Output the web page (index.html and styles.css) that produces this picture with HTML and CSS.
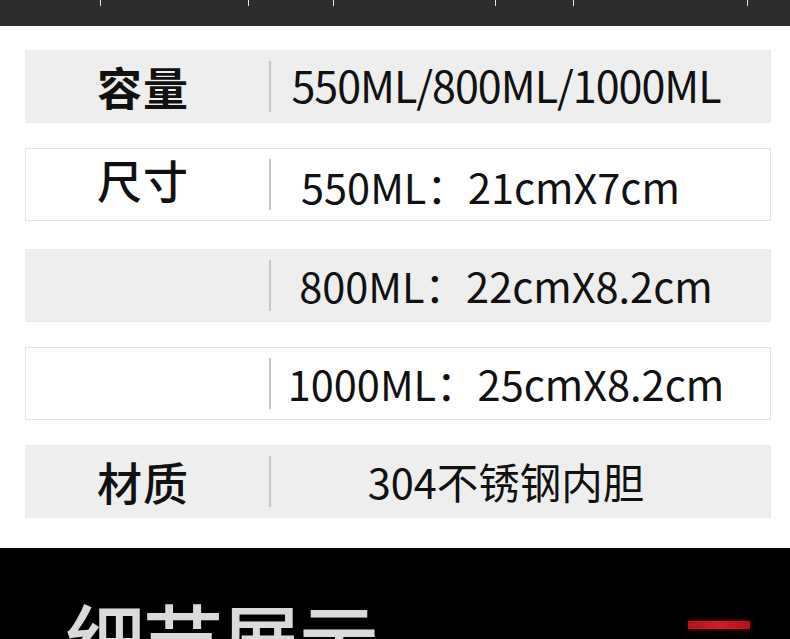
FILE: index.html
```html
<!DOCTYPE html>
<html lang="zh-CN">
<head>
  <meta charset="UTF-8">
  <title>产品参数</title>
  <meta name="viewport" content="width=device-width, initial-scale=1.0">
  <link rel="stylesheet" href="styles.css">
</head>
<body>
  <!-- cropped bottom of the previous table -->
  <div class="topbar">
    <span class="tick w100"></span>
    <span class="tick w148"></span>
    <span class="tick w85"></span>
    <span class="tick w162"></span>
    <span class="tick w78"></span>
    <span class="tick w174"></span>
  </div>

  <main class="specs">
    <div class="row gray">
      <div class="label heavy">容量</div>
      <div class="sep"></div>
      <div class="value tight">550ML/800ML/1000ML</div>
    </div>
    <div class="row white">
      <div class="label up">尺寸</div>
      <div class="sep"></div>
      <div class="value shift">550ML：21cmX7cm</div>
    </div>
    <div class="row gray lower">
      <div class="label"></div>
      <div class="sep"></div>
      <div class="value">800ML：22cmX8.2cm</div>
    </div>
    <div class="row white">
      <div class="label"></div>
      <div class="sep"></div>
      <div class="value">1000ML：25cmX8.2cm</div>
    </div>
    <div class="row gray">
      <div class="label">材质</div>
      <div class="sep"></div>
      <div class="value">304不锈钢内胆</div>
    </div>
  </main>

  <section class="detail">
    <h2 class="detail-title">细节展示</h2>
    <span class="red-bar"></span>
  </section>
</body>
</html>
```

FILE: styles.css
```css
:root{
  --ink:#111;
  --gray-row:#eeeeee;
  --row-line:#e4e4e4;
  --sep:#c6c6c6;
}
*{box-sizing:border-box;}
html,body{margin:0;padding:0;}
body{
  width:790px; height:639px; overflow:hidden;
  background:#fff;
  font-family:"Noto Sans CJK SC","Noto Sans",sans-serif;
  color:var(--ink);
}

/* top strip */
.topbar{
  height:26px; background:#2f2d2c;
  display:flex; align-items:flex-start;
}
.tick{height:6px; border-right:1px solid #e6e6e6;}
.w100{width:101px;}
.w148{width:148px;}
.w85{width:85px;}
.w162{width:162px;}
.w78{width:78px;}
.w174{width:174px;}

/* spec table */
.specs{
  padding:24px 19px 0 25px;
  display:flex; flex-direction:column; gap:25px;
}
.row{
  height:73px;
  display:grid; grid-template-columns:243px 2px 1fr;
  align-items:center;
  border:1px solid var(--row-line);
}
.row.gray{background:var(--gray-row); border-color:#ebebeb;}
.row.white{background:#fff;}
.row.lower{margin-top:3px;}
.label{
  text-align:center; padding-right:9px;
  font-size:45px; font-weight:500; line-height:1;
  letter-spacing:1px;
}
.label.heavy{font-weight:700;}
.label.up{margin-top:-10px;}
.sep{height:51px; background:var(--sep);}
.value{
  text-align:center; padding-right:29px;
  font-size:41.5px; line-height:1;
  white-space:nowrap;
}
.value.tight{font-size:43px; letter-spacing:-1px; margin-top:-5px;}
.value.shift{padding-right:60px; margin-top:4px;}

/* detail header */
.detail{
  margin-top:30px;
  height:120px; background:#000;
  display:flex; justify-content:space-between; align-items:flex-start;
  padding:49px 40px 0 65px;
}
.detail-title{
  margin:0; color:#dadada;
  font-size:80px; font-weight:500; line-height:1;
  letter-spacing:-2px;
}
.red-bar{
  margin-top:24px;
  width:62px; height:8px;
  background:linear-gradient(90deg,#b5121a,#d01e24,#b5121a);
  box-shadow:0 0 6px rgba(200,20,25,0.5);
}
```
